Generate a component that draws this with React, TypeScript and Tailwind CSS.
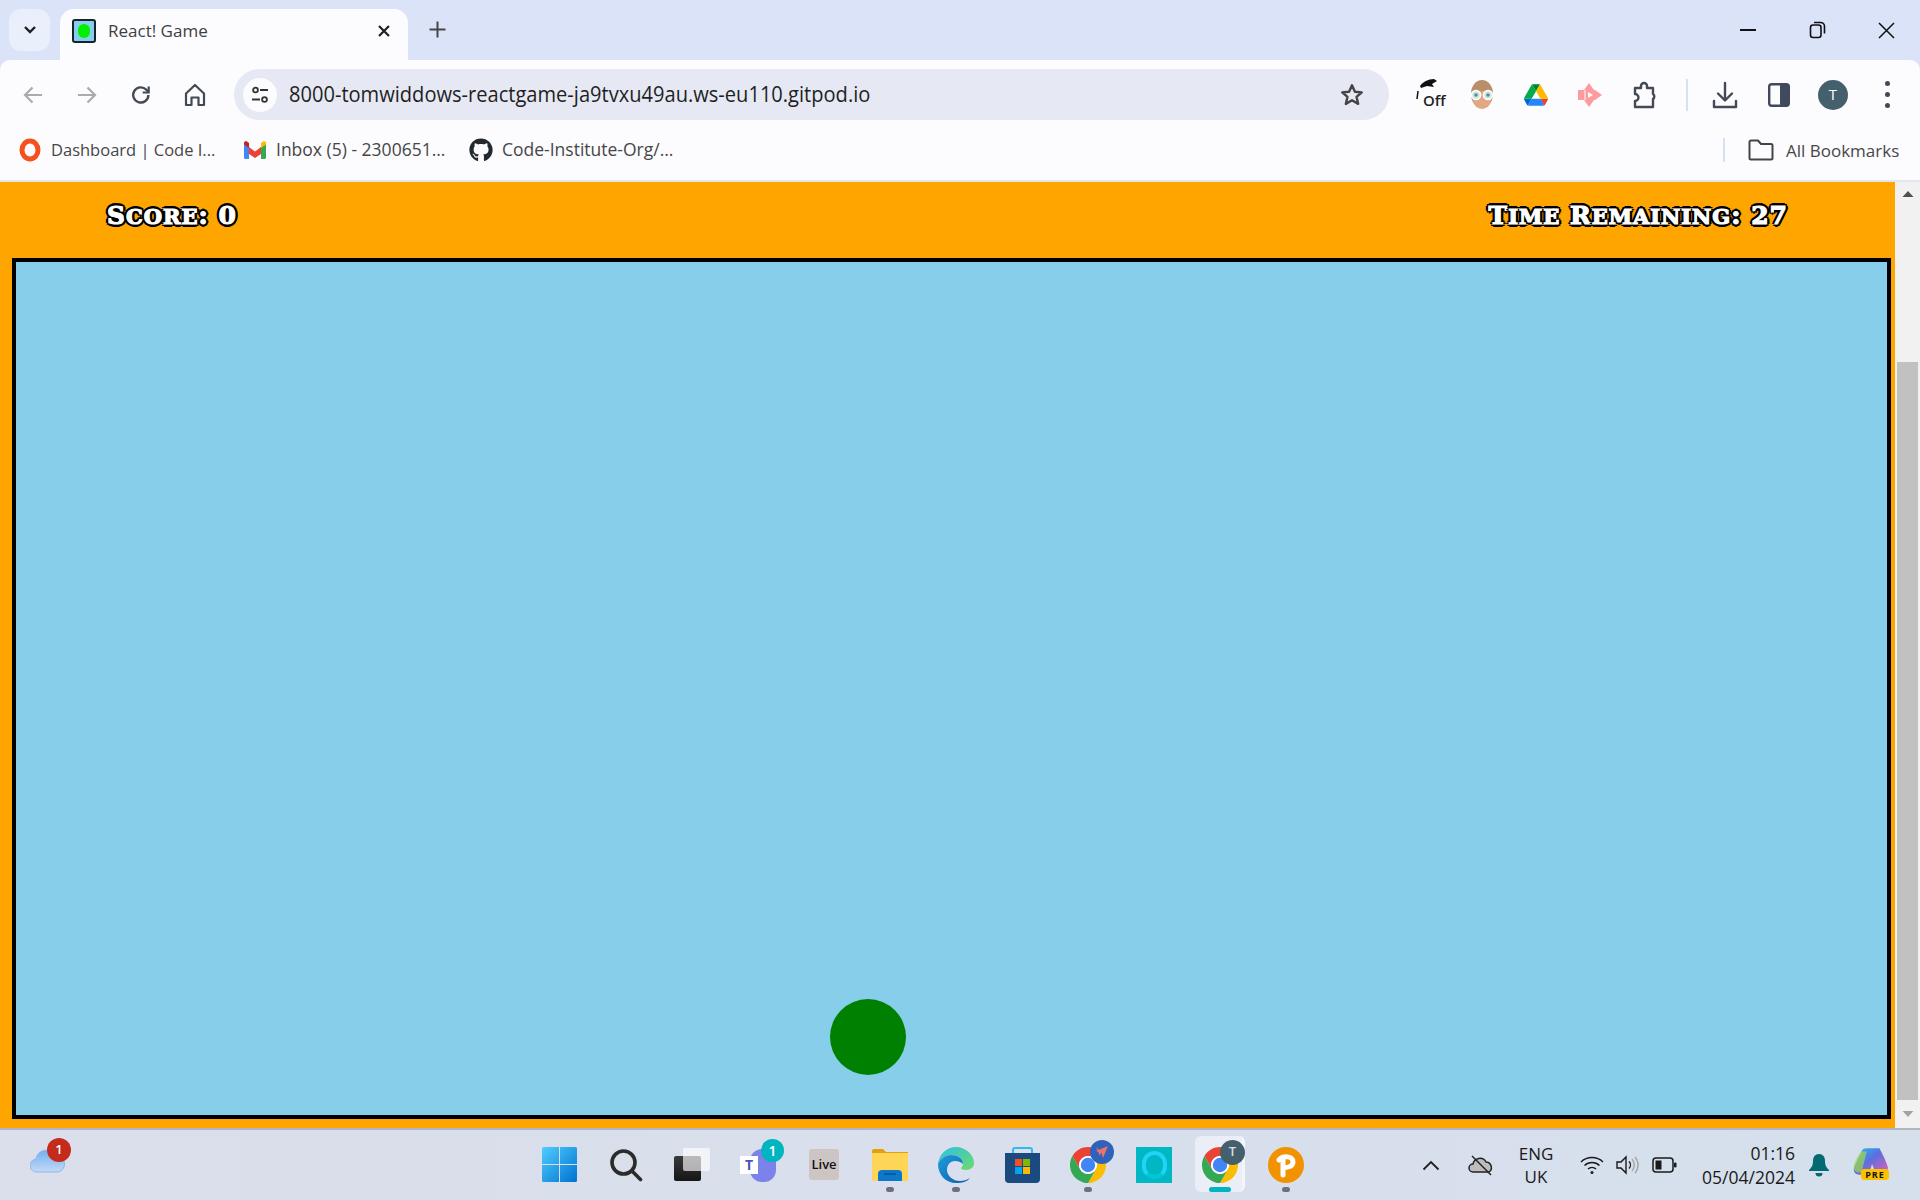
import React from "react";
import { FaGithub } from "react-icons/fa";

const UI = "font-['Open_Sans','Noto_Sans',sans-serif]";

function Slot({ w = "w-[54px]", children }: { w?: string; children?: React.ReactNode }) {
  return <div className={`${w} h-full shrink-0 flex items-center justify-center`}>{children}</div>;
}

function ChromeLogo({ size = 36 }: { size?: number }) {
  return (
    <svg width={size} height={size} viewBox="4 4 40 40">
      <path fill="#ea4335" d="M6.68 14A20 20 0 0 1 41.32 14H24A10 10 0 0 0 15.34 29Z" />
      <path fill="#fbbc04" d="M41.32 14A20 20 0 0 1 24 44L32.66 29A10 10 0 0 0 24 14Z" />
      <path fill="#34a853" d="M24 44A20 20 0 0 1 6.68 14L15.34 29A10 10 0 0 0 32.66 29Z" />
      <circle cx="24" cy="24" r="10" fill="#fff" />
      <circle cx="24" cy="24" r="8" fill="#4285f4" />
    </svg>
  );
}

function TabStrip() {
  return (
    <div className="h-[60px] shrink-0 bg-[#dbe3f9] flex items-start pt-[9px] relative">
      <div className="ml-[9px] w-[41px] h-[42px] rounded-[12px] bg-[#eaeffc] flex items-center justify-center">
        <svg width="14" height="10" viewBox="0 0 14 10" fill="none" stroke="#1f1f1f" strokeWidth="2.4"><path d="M2 2l5 5 5-5" /></svg>
      </div>
      <div className="ml-[10px] w-[348px] h-[51px] rounded-t-[14px] bg-[#fcfbfe] flex items-center pl-[12px] pb-[8px]">
        <div className="w-[24px] h-[24px] rounded-[3px] border-2 border-[#10262c] bg-[#87ceeb] flex items-center justify-center">
          <div className="w-[12px] h-[14px] rounded-full bg-[#00f000]" />
        </div>
        <span className={`${UI} ml-[12px] text-[17px] text-[#3c4043] leading-none`}>React! Game</span>
        <svg className="ml-auto mr-[17px]" width="14" height="14" viewBox="0 0 14 14" stroke="#1f1f1f" strokeWidth="2.2"><path d="M2 2l10 10M12 2L2 12" /></svg>
      </div>
      <div className="ml-[21px] mt-[12px]">
        <svg width="17" height="17" viewBox="0 0 17 17" stroke="#474747" strokeWidth="2"><path d="M8.5 0.5v16M0.5 8.5h16" /></svg>
      </div>
      <div className="ml-auto flex items-center h-[42px]">
        <div className="w-[68px] flex justify-center"><div className="w-[16px] h-[2px] bg-[#111]" /></div>
        <div className="w-[70px] flex justify-center">
          <svg width="17" height="18" viewBox="0 0 17 18" fill="none" stroke="#111" strokeWidth="1.6"><rect x="1.5" y="4" width="10.5" height="12.5" rx="2.5" /><path d="M5 1.5h6.5a4 4 0 0 1 4 4v7" /></svg>
        </div>
        <div className="w-[68px] flex justify-center">
          <svg width="17" height="17" viewBox="0 0 17 17" stroke="#111" strokeWidth="1.5"><path d="M1 1l15 15M16 1L1 16" /></svg>
        </div>
      </div>
    </div>
  );
}

const tool = { fill: "none", stroke: "#444a55", strokeWidth: 2.2, strokeLinecap: "round", strokeLinejoin: "round" } as const;

function Toolbar() {
  return (
    <div className="h-[60px] shrink-0 bg-[#fcfbfe] rounded-t-[10px] flex items-center pl-[6px] pt-[9px]">
      <Slot><svg width="20" height="18" viewBox="0 0 20 18" fill="none" stroke="#a9abb0" strokeWidth="2.2"><path d="M19 9H2M9.5 1.5L2 9l7.5 7.5" /></svg></Slot>
      <Slot><svg width="20" height="18" viewBox="0 0 20 18" fill="none" stroke="#a9abb0" strokeWidth="2.2"><path d="M1 9h17M10.5 1.5L18 9l-7.5 7.5" /></svg></Slot>
      <Slot><svg width="22" height="22" viewBox="0 0 22 22" fill="none" stroke="#444a55" strokeWidth="2.4"><path d="M18.4 11a7.6 7.6 0 1 1-2.3-5.5L18.5 8" /><path d="M18.7 2.5v6h-6" fill="none" strokeWidth="2.2" /></svg></Slot>
      <Slot><svg width="22" height="24" viewBox="0 0 22 24" {...tool}><path d="M2 10.5L11 2l9 8.5V22h-5.5v-7.5h-7V22H2Z" /></svg></Slot>
      <div className="ml-[12px] w-[1155px] h-[51px] rounded-full bg-[#e6e9f3] flex items-center pl-[9px]">
        <div className="w-[34px] h-[34px] rounded-full bg-[#fcfbfe] flex items-center justify-center">
          <svg width="18" height="18" viewBox="0 0 18 18" fill="none" stroke="#333" strokeWidth="1.8"><circle cx="4.5" cy="4" r="2.4" /><path d="M9 4h8M1 13.5h8" /><circle cx="13.5" cy="13.5" r="2.4" /></svg>
        </div>
        <span className={`${UI} ml-[12px] text-[21px] leading-none text-[#1f1f1f] whitespace-nowrap scale-x-[0.956] origin-left`}>8000-tomwiddows-reactgame-ja9tvxu49au.ws-eu110.gitpod.io</span>
        <svg className="ml-auto mr-[24px]" width="26" height="26" viewBox="0 0 24 24" fill="none" stroke="#444" strokeWidth="2.2" strokeLinejoin="round"><path d="M12 3l2.7 6 6.3.6-4.8 4.2 1.5 6.4L12 16.8l-5.7 3.4 1.500-6.400L3 9.6 9.3 9Z" /></svg>
      </div>
      <Slot w="ml-[17px] w-[54px]">
        <div className="relative w-[36px] h-[36px]">
          <svg className="absolute left-[0px] top-0" width="28" height="24" viewBox="0 0 28 24"><path d="M5 9c3-4 8-7 14-7l3 2-5 3 2 3-7-1-6 2Z" fill="#111" /><path d="M3 14l-1 8" stroke="#111" strokeWidth="1.5" /></svg>
          <span className={`${UI} absolute left-[7px] top-[14px] bg-[#fcfbfe] rounded-[3px] px-[1px] text-[15px] leading-[18px] font-semibold text-[#222]`}>Off</span>
        </div>
      </Slot>
      <Slot w="w-[44px]">
        <svg width="24" height="30" viewBox="0 0 24 30"><ellipse cx="12" cy="14" rx="11" ry="14" fill="#b98e6a" /><ellipse cx="12" cy="20" rx="9" ry="9" fill="#e2a884" /><circle cx="6" cy="15" r="4.6" fill="#cfe9e6" stroke="#fff" strokeWidth="1.5" /><circle cx="18" cy="15" r="4.6" fill="#cfe9e6" stroke="#fff" strokeWidth="1.5" /><circle cx="6" cy="15" r="1.8" fill="#5a8c8c" /><circle cx="18" cy="15" r="1.8" fill="#5a8c8c" /></svg>
      </Slot>
      <Slot w="ml-[5px] w-[54px]">
        <svg width="24" height="22" viewBox="0 0 87 78"><path fill="#0066da" d="M6.6 66.9l3.8 6.6c.8 1.4 1.9 2.5 3.2 3.3L28 53H0c0 1.6.4 3.1 1.2 4.5z" /><path fill="#00ac47" d="M43.6 25L29.3 1.2C28 2 26.9 3.1 26.1 4.5L1.2 48.5C.4 49.9 0 51.4 0 53h27.5z" /><path fill="#ea4335" d="M73.5 76.8c1.3-.8 2.4-1.9 3.2-3.3l1.6-2.8 7.6-13.2c.8-1.4 1.2-2.9 1.2-4.5H59.7l5.9 11.5z" /><path fill="#00832d" d="M43.6 25L57.9 1.2C56.6.4 55.1 0 53.5 0H33.7c-1.6 0-3.1.4-4.4 1.2z" /><path fill="#2684fc" d="M59.8 53H27.5L13.6 76.8c1.3.8 2.8 1.2 4.4 1.2h51.2c1.6 0 3.1-.4 4.4-1.2z" /><path fill="#ffba00" d="M73.4 26.5L60.7 4.5c-.8-1.4-1.9-2.5-3.2-3.3L43.6 25l16.2 28h27.5c0-1.6-.4-3.1-1.2-4.5z" /></svg>
      </Slot>
      <Slot>
        <svg width="26" height="26" viewBox="0 0 26 26" fill="#ff9a9f"><path d="M1 8h6l5-7 5 7h1l7 5-7 5h-1l-5 7-5-7H1Z" /><path d="M11 10v6l5-3Z" fill="#fff" /><path d="M8 8v10" stroke="#fff" strokeWidth="1" /></svg>
      </Slot>
      <Slot w="w-[56px]">
        <svg width="24" height="28" viewBox="0 0 24 28" {...tool} strokeWidth={2.4}><path d="M2 7h6V5a3 3 0 0 1 6 0v2h6v6a3 3 0 0 1 0 5v8H2v-6a3.5 3.5 0 0 0 0-7Z" /></svg>
      </Slot>
      <div className="ml-[13px] w-[2px] h-[32px] bg-[#d5e0f6]" />
      <Slot w="ml-[10px] w-[54px]">
        <svg width="26" height="28" viewBox="0 0 26 28" {...tool} strokeWidth={2.4}><path d="M13 2v17M6 12.5l7 7 7-7M2 20v6h22v-6" /></svg>
      </Slot>
      <Slot>
        <svg width="22" height="24" viewBox="0 0 22 24"><rect x="1.2" y="1.2" width="19.6" height="21.6" rx="2.5" fill="none" stroke="#3f4a5e" strokeWidth="2.4" /><rect x="12" y="1" width="9" height="22" rx="2" fill="#3f4a5e" /></svg>
      </Slot>
      <Slot>
        <div className={`${UI} w-[30px] h-[30px] rounded-full bg-[#45606d] text-white text-[15px] flex items-center justify-center`}>T</div>
      </Slot>
      <Slot>
        <div className="flex flex-col gap-[6px]"><i className="w-[5px] h-[5px] rounded-full bg-[#444a55]" /><i className="w-[5px] h-[5px] rounded-full bg-[#444a55]" /><i className="w-[5px] h-[5px] rounded-full bg-[#444a55]" /></div>
      </Slot>
    </div>
  );
}

function Bookmark({ icon, label, cls, size }: { icon: React.ReactNode; label: string; cls: string; size: string }) {
  return (
    <div className={`flex items-center h-full ${cls}`}>
      <div className="w-[24px] flex justify-center">{icon}</div>
      <span className={`${UI} ml-[9px] ${size} leading-none text-[#474747] whitespace-nowrap`}>{label}</span>
    </div>
  );
}

function Bookmarks() {
  return (
    <div className="h-[60px] box-content shrink-0 bg-[#fcfbfe] flex items-center pl-[18px] border-b-2 border-[#e4e6ef]">
      <Bookmark
        cls="w-[225px]"
        size="text-[16.5px]"
        icon={<svg width="22" height="24" viewBox="0 0 22 24"><ellipse cx="11" cy="12" rx="8" ry="9" fill="none" stroke="#f4511e" strokeWidth="5" /></svg>}
        label="Dashboard | Code I..."
      />
      <Bookmark
        cls="w-[226px]"
        size="text-[17.5px]"
        icon={
          <svg width="22" height="18" viewBox="0 0 22 18">
            <path d="M0 3l5 3v12H1.500A1.500 1.500 0 0 1 0 16.500Z" fill="#4285f4" />
            <path d="M22 3l-5 3v12h3.500a1.500 1.500 0 0 0 1.500-1.500Z" fill="#34a853" />
            <path d="M5 6v7l6 4 6-4V6l-6 4.500Z" fill="#ea4335" />
            <path d="M0 3.500V2C0 .3 2 0 3 .6L5 2v5Z" fill="#c5221f" />
            <path d="M17 2l2-1.400C20 0 22 .3 22 2v1.500L17 7Z" fill="#fbbc04" />
          </svg>
        }
        label="Inbox (5) - 2300651..."
      />
      <Bookmark cls="w-[240px]" size="text-[17.5px]" icon={<FaGithub size={24} color="#24292f" />} label="Code-Institute-Org/..." />
      <div className="ml-auto w-[2px] h-[24px] bg-[#d5e0f6]" />
      <svg className="ml-[23px]" width="26" height="22" viewBox="0 0 26 22" fill="none" stroke="#444" strokeWidth="2" strokeLinejoin="round"><path d="M1.500 19V3a1.500 1.500 0 0 1 1.500-1.500h7l3 3.500h10a1.500 1.500 0 0 1 1.500 1.500V19a1.500 1.500 0 0 1-1.500 1.500H3A1.500 1.500 0 0 1 1.500 19Z" /></svg>
      <span className={`${UI} ml-[12px] w-[134px] text-[17px] leading-none text-[#474747] whitespace-nowrap`}>All Bookmarks</span>
    </div>
  );
}

const heading = "font-['DejaVu_Serif',serif] font-bold [font-variant:small-caps] text-white text-[25px] tracking-[1px] leading-none whitespace-nowrap [-webkit-text-stroke:1.2px_white] [text-shadow:2px_0_0_#000,-2px_0_0_#000,0_2px_0_#000,0_-2px_0_#000,2px_2px_0_#000,-2px_-2px_0_#000,2px_-2px_0_#000,-2px_2px_0_#000,3px_0_0_#000,-3px_0_0_#000,0_3px_0_#000,0_-3px_0_#000]";
const low = "text-[30px]";

function Game() {
  return (
    <div className="flex-1 min-w-0 bg-[#ffa500] flex flex-col">
      <div className="h-[76px] shrink-0 flex items-center justify-between px-[107px] pb-[12px]">
        <h2 className={heading}>S<span className={low}>core</span>: 0</h2>
        <h2 className={heading}>T<span className={low}>ime</span> R<span className={low}>emaining</span>: 27</h2>
      </div>
      <div className="ml-[12px] mr-[4px] h-[861px] shrink-0 border-4 border-black bg-[#87ceeb] relative">
        <div className="absolute left-[814px] top-[737px] w-[76px] h-[76px] rounded-full bg-[#008000]" />
      </div>
    </div>
  );
}

function Scrollbar() {
  return (
    <div className="w-[25px] shrink-0 bg-[#f1f1f1] flex flex-col items-center pt-[8px]">
      <svg width="12" height="8" viewBox="0 0 12 8" fill="#505050"><path d="M6 1l5.500 6H.500Z" /></svg>
      <div className="mt-[164px] w-[21px] h-[738px] bg-[#c1c1c1]" />
      <svg className="mt-[10px]" width="12" height="8" viewBox="0 0 12 8" fill="#a3a3a3"><path d="M6 7L.500 1h11Z" /></svg>
    </div>
  );
}

function Dot({ active }: { active?: boolean }) {
  return <div className={active ? "w-[22px] h-[5px] rounded-full bg-[#00b4c0] mt-[3px]" : "w-[8px] h-[5px] rounded-full bg-[#6d717c] mt-[3px]"} />;
}

function TaskIcon({ children, dot, w = "w-[66px]" }: { children: React.ReactNode; dot?: boolean; w?: string }) {
  return (
    <div className={`${w} h-full shrink-0 flex flex-col items-center relative`}>
      <div className="h-[54px] pt-[15px] flex items-center justify-center">{children}</div>
      <div className="h-[6px]">{dot && <Dot />}</div>
    </div>
  );
}

function Taskbar() {
  return (
    <div className="h-[72px] shrink-0 border-t-2 border-[#b3b6c2] bg-gradient-to-r from-[#dbdeeb] via-[#d9dfec] to-[#d5e0ec] flex items-stretch">
      <div className="w-[525px] shrink-0 pl-[30px] pt-[19px]">
        <div className="relative w-[36px] h-[24px]">
          <svg width="36" height="24" viewBox="0 0 36 24"><defs><linearGradient id="cl" x1="0" y1="0" x2="0" y2="1"><stop offset="0" stopColor="#6fb1f3" /><stop offset="1" stopColor="#c5d8f5" /></linearGradient></defs><path d="M7 23a6.500 6.500 0 0 1-1-13 10 10 0 0 1 19-3 8 8 0 0 1 3 16Z" fill="url(#cl)" stroke="#8fb7ee" strokeWidth="1" /></svg>
          <div className={`${UI} absolute left-[17px] -top-[11px] w-[24px] h-[24px] rounded-full bg-[#c42b1c] text-white text-[13px] font-semibold flex items-center justify-center`}>1</div>
        </div>
      </div>

      <TaskIcon w="w-[68px]">
        <svg width="35" height="35" viewBox="0 0 35 35"><defs><linearGradient id="win" x1="0" y1="0" x2="1" y2="1"><stop offset="0" stopColor="#50cdfd" /><stop offset="1" stopColor="#0072d2" /></linearGradient></defs><path d="M0 1.500A1.500 1.500 0 0 1 1.500 0H17v17H0Zm18-1.500h15.500A1.500 1.500 0 0 1 35 1.500V17H18ZM0 18h17v17H1.500A1.500 1.500 0 0 1 0 33.500Zm18 0h17v15.500a1.500 1.500 0 0 1-1.500 1.500H18Z" fill="url(#win)" /></svg>
      </TaskIcon>
      <TaskIcon>
        <svg width="34" height="34" viewBox="0 0 34 34" fill="none" stroke="#2b2b2b" strokeWidth="3.600" strokeLinecap="round"><circle cx="14.500" cy="14.500" r="11.500" /><path d="M23 23l8.500 8.500" /></svg>
      </TaskIcon>
      <TaskIcon>
        <div className="relative w-[36px] h-[34px]">
          <div className="absolute left-0 top-[8px] w-[27px] h-[25px] rounded-[2px] bg-gradient-to-b from-[#3a3a3a] to-[#161616]" />
          <div className="absolute left-[9px] top-0 w-[27px] h-[23px] rounded-[2px] bg-white/65" />
        </div>
      </TaskIcon>
      <TaskIcon>
        <div className="relative w-[36px] h-[34px]">
          <div className="absolute left-[10px] top-[1px] w-[26px] h-[33px] rounded-[12px] bg-[#7b83eb]" />
          <div className={`${UI} absolute left-0 top-[8px] w-[18px] h-[18px] bg-white text-[#4b53bc] text-[14px] font-bold flex items-center justify-center`}>T</div>
          <div className={`${UI} absolute left-[21px] -top-[9px] w-[23px] h-[23px] rounded-full bg-[#00b4c0] text-white text-[14px] font-semibold flex items-center justify-center`}>1</div>
        </div>
      </TaskIcon>
      <TaskIcon>
        <div className={`${UI} w-[30px] h-[31px] rounded-[3px] bg-[#cdc5c3] text-[#111] text-[13px] font-semibold flex items-center justify-center`}>Live</div>
      </TaskIcon>
      <TaskIcon dot>
        <svg width="36" height="32" viewBox="0 0 36 32"><path d="M0 2a2 2 0 0 1 2-2h9l3 3h22v4H0Z" fill="#e3a008" /><path d="M0 4h36v28H0Z" fill="#ffd557" /><path d="M6 32v-7a4 4 0 0 1 4-4h16a4 4 0 0 1 4 4v7Z" fill="#0b78c9" /><path d="M12 25h12" stroke="#08508f" strokeWidth="1.500" /></svg>
      </TaskIcon>
      <TaskIcon dot>
        <svg width="36" height="36" viewBox="0 0 36 36"><defs><linearGradient id="e1" x1="0" y1="0" x2="1" y2="1"><stop offset="0" stopColor="#2cc0e6" /><stop offset="1" stopColor="#6fdb6a" /></linearGradient><linearGradient id="e2" x1="0" y1="0" x2="1" y2="1"><stop offset="0" stopColor="#1f9ddc" /><stop offset="1" stopColor="#0a5cae" /></linearGradient></defs><path d="M0 17C1 7 9 0 18 0c10 0 18 8 18 16 0 4-3 7-8 7-3 0-5-1-5-2 1-1 2-2 2-4 0-6-6-9-12-9S2 12 0 17Z" fill="url(#e1)" /><path d="M0 17c2-5 7-9 13-9 6 0 12 3 12 9-2-2-5-3-8-3-5 0-8 4-8 9 0 6 6 11 13 11 4 0 7-1 10-3-3 4-8 5-14 5C8 36 0 28 0 17Z" fill="url(#e2)" /></svg>
      </TaskIcon>
      <TaskIcon>
        <svg width="35" height="36" viewBox="0 0 35 36"><path d="M8 7V3a2 2 0 0 1 2-2h15a2 2 0 0 1 2 2v4" fill="none" stroke="#35b8f0" strokeWidth="2" /><path d="M0 6h35v26a4 4 0 0 1-4 4H4a4 4 0 0 1-4-4Z" fill="#1b4a80" /><rect x="10" y="12" width="7" height="7" fill="#f25022" /><rect x="18" y="12" width="7" height="7" fill="#7fba00" /><rect x="10" y="20" width="7" height="7" fill="#00a4ef" /><rect x="18" y="20" width="7" height="7" fill="#ffb900" /></svg>
      </TaskIcon>
      <TaskIcon dot>
        <div className="relative w-[36px] h-[36px]">
          <ChromeLogo />
          <div className="absolute left-[20px] -top-[7px] w-[24px] h-[24px] rounded-full bg-[#2f62ba] flex items-center justify-center">
            <svg width="16" height="16" viewBox="0 0 16 16" fill="#f0736a"><path d="M14 2L9 14 7.500 9 2 7Z" /><path d="M2 3l5 5-1 4Z" /></svg>
          </div>
        </div>
      </TaskIcon>
      <TaskIcon>
        <div className="w-[36px] h-[36px] bg-[#00b8c4] flex items-center justify-center">
          <div className="w-[25px] h-[28px] rounded-full border-[4px] border-[#22d3f8] border-b-[#00c8d8]" />
        </div>
      </TaskIcon>
      <div className="w-[66px] h-full shrink-0 flex flex-col items-center relative">
        <div className="absolute left-[8px] top-[6px] w-[50px] h-[56px] rounded-[6px] bg-[#ebeef7] border-r-[3px] border-[#f3f5fb]" />
        <div className="h-[54px] pt-[15px] flex items-center justify-center relative">
          <div className="relative w-[36px] h-[36px]">
            <ChromeLogo />
            <div className={`${UI} absolute left-[18px] -top-[7px] w-[25px] h-[25px] rounded-full bg-[#45606d] text-[#d9dfe3] text-[13px] font-semibold flex items-center justify-center`}>T</div>
          </div>
        </div>
        <div className="h-[6px] relative"><Dot active /></div>
      </div>
      <TaskIcon dot>
        <div className="w-[36px] h-[36px] rounded-full bg-[#f39200] flex items-center justify-center">
          <svg width="20" height="26" viewBox="0 0 20 26" fill="none" stroke="#fff" strokeWidth="5" strokeLinecap="round"><path d="M7 23V7M3 8c3-4 14-5 14 2 0 5-7 6-10 5" /></svg>
        </div>
      </TaskIcon>

      <div className="flex-1 min-w-0 flex items-center relative">
        <svg className="ml-[103px]" width="18" height="11" viewBox="0 0 18 11" fill="none" stroke="#222" strokeWidth="1.800"><path d="M1.500 9.500L9 2l7.500 7.500" /></svg>
        <svg className="ml-[28px]" width="26" height="22" viewBox="0 0 26 22"><path d="M5 18a4 4 0 0 1 0-8 7 7 0 0 1 13-2 5.500 5.500 0 0 1 3 10Z" fill="#bdbdbd" stroke="#222" strokeWidth="1.500" /><path d="M4 2l19 19" stroke="#222" strokeWidth="1.500" /></svg>
        <div className={`${UI} ml-[12px] w-[60px] text-center text-[17px] leading-[23px] text-[#1a1a1a]`}>ENG<br />UK</div>
        <svg className="ml-[14px]" width="24" height="20" viewBox="0 0 24 20" fill="none" stroke="#1a1a1a" strokeWidth="1.500"><path d="M1 7a16 16 0 0 1 22 0M4.500 10.500a11 11 0 0 1 15 0M8 14a6 6 0 0 1 8 0" /><circle cx="12" cy="17.500" r="1.500" fill="#1a1a1a" stroke="none" /></svg>
        <svg className="ml-[12px]" width="24" height="20" viewBox="0 0 24 20" fill="none" stroke="#1a1a1a" strokeWidth="1.400"><path d="M1 7h4l5-5v16l-5-5H1Z" /><path d="M13 6.500a5 5 0 0 1 0 7" /><path d="M16 4a9 9 0 0 1 0 12M19 2a12 12 0 0 1 0 16" stroke="#a6a6a6" /></svg>
        <svg className="ml-[12px]" width="25" height="16" viewBox="0 0 25 16"><rect x="1" y="1" width="20" height="14" rx="3" fill="none" stroke="#1a1a1a" strokeWidth="1.500" /><rect x="3.500" y="3.500" width="6" height="9" fill="#1a1a1a" /><rect x="22" y="5.500" width="2.500" height="5" rx="1" fill="#1a1a1a" /></svg>
        <div className={`${UI} ml-[11px] w-[107px] shrink-0 text-right text-[17.5px] leading-[24px] text-[#1a1a1a] whitespace-nowrap`}>01:16<br />05/04/2024</div>
        <svg className="ml-[14px]" width="20" height="24" viewBox="0 0 20 24" fill="#046a72"><path d="M10 1c4 0 6 3 6 7 0 5 2 7 4 9v1H0v-1c2-2 4-4 4-9 0-4 2-7 6-7Z" /><path d="M6.500 20h7a3.500 3.500 0 0 1-7 0Z" /></svg>
        <div className="relative ml-[24px] w-[36px] h-[34px]">
          <svg width="36" height="28" viewBox="0 0 34 26"><defs><linearGradient id="cp" x1="0" y1="0" x2="1" y2="1"><stop offset="0" stopColor="#25c2f0" /><stop offset=".45" stopColor="#5a6fe0" /><stop offset="1" stopColor="#e85fb0" /></linearGradient></defs><path d="M8 3c1-2 2-3 5-3h12l5 10 3 8c0 3-2 5-4 5h-8l-3-8-3 10H6c-4 0-6-3-5-7Z" fill="url(#cp)" /><path d="M1 16c1-4 3-9 7-13l5 0-5 20H6c-4 0-6-3-5-7Z" fill="#a2d94a" opacity=".7" /></svg>
          <span className={`${UI} absolute left-[8px] top-[21px] w-[28px] h-[11px] rounded-[3px] bg-[#fcc200] text-[#111] text-[9px] leading-[11px] font-bold tracking-[1px] text-center`}>PRE</span>
        </div>
      </div>
    </div>
  );
}

export default function App() {
  return (
    <div className="w-[1920px] h-[1200px] overflow-hidden flex flex-col bg-[#dbe3f9]">
      <TabStrip />
      <Toolbar />
      <Bookmarks />
      <div className="flex-1 min-h-0 flex">
        <Game />
        <Scrollbar />
      </div>
      <Taskbar />
    </div>
  );
}
